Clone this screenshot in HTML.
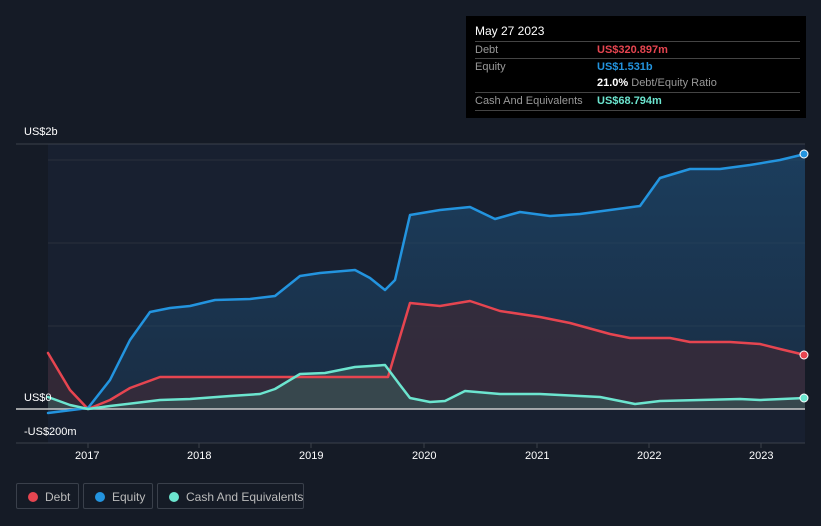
<!DOCTYPE html>
<html><head><style>
html,body{margin:0;width:821px;height:526px;overflow:hidden}
body{background:#151b26;font-family:"Liberation Sans",sans-serif;position:relative}
.tt{position:absolute;left:466px;top:16px;width:340px;height:102px;background:#000;color:#fff;font-size:11px}
.tt .h{position:absolute;left:9px;top:8px;font-size:12px}
.row{position:absolute;left:9px;width:325px;height:17px;border-top:1px solid #444;line-height:17px;color:#999;white-space:nowrap}
.row span{position:absolute;left:122px;font-weight:bold}
.lg{position:absolute;top:483px;height:26px;border:1px solid #3a404b;border-radius:2px;color:#bbb;font-size:12px;line-height:26px;box-sizing:border-box;white-space:nowrap}
.lg i{position:absolute;left:11px;top:8px;width:10px;height:10px;border-radius:50%}
.lg b{font-weight:normal;position:absolute;left:28px}
.ax{position:absolute;color:#fff;font-size:11px}
</style></head><body>
<svg width="821" height="526" style="position:absolute;left:0;top:0">
<defs>
<linearGradient id="ge" x1="0" y1="0" x2="0" y2="1"><stop offset="0" stop-color="#1d4a70" stop-opacity=".7"/><stop offset="1" stop-color="#1d4a70" stop-opacity=".3"/></linearGradient>
</defs>
<rect x="48" y="144" width="757" height="299" fill="#182030"/>
<line x1="16" y1="144" x2="805" y2="144" stroke="#3a404b"/>
<g stroke="#2a303b"><line x1="48" y1="160" x2="805" y2="160"/><line x1="48" y1="243" x2="805" y2="243"/><line x1="48" y1="326" x2="805" y2="326"/></g>
<polygon fill="url(#ge)" points="48,409 48,413 88,408 110,380 130,340 150,312 170,308 190,306 215,300 250,299 275,296 300,276 320,273 355,270 370,278 385,290 395,280 410,215 440,210 470,207 495,219 520,212 550,216 580,214 610,210 640,206 660,178 690,169 720,169 750,165 780,160 805,154 805,409"/>
<polygon fill="#3a2a38" fill-opacity=".8" points="48,409 48,353 70,390 88,409 110,400 130,388 160,377 388,377 410,303 440,306 470,301 500,311 540,317 570,323 610,334 630,338 670,338 690,342 730,342 760,344 780,349 805,355 805,409"/>
<polygon fill="#3a5a5a" fill-opacity=".6" points="48,409 48,397 70,405 88,409 110,406 160,400 190,399 230,396 260,394 275,389 300,374 325,373 355,367 385,365 400,385 410,398 430,402 445,401 465,391 500,394 540,394 600,397 615,400 635,404 660,401 700,400 740,399 760,400 805,398 805,409"/>
<line x1="16" y1="409" x2="805" y2="409" stroke="#ccc" stroke-width="1.5"/>
<line x1="16" y1="443" x2="805" y2="443" stroke="#3a404b"/>
<g stroke="#3a404b"><line x1="88" y1="443" x2="88" y2="448"/><line x1="199" y1="443" x2="199" y2="448"/><line x1="311" y1="443" x2="311" y2="448"/><line x1="424" y1="443" x2="424" y2="448"/><line x1="537" y1="443" x2="537" y2="448"/><line x1="649" y1="443" x2="649" y2="448"/><line x1="761" y1="443" x2="761" y2="448"/></g>
<g fill="none" stroke-width="2.5" stroke-linejoin="round" stroke-linecap="round">
<polyline stroke="#e64550" points="48,353 70,390 88,409 110,400 130,388 160,377 388,377 410,303 440,306 470,301 500,311 540,317 570,323 610,334 630,338 670,338 690,342 730,342 760,344 780,349 805,355"/>
<polyline stroke="#2394df" points="48,413 88,408 110,380 130,340 150,312 170,308 190,306 215,300 250,299 275,296 300,276 320,273 355,270 370,278 385,290 395,280 410,215 440,210 470,207 495,219 520,212 550,216 580,214 610,210 640,206 660,178 690,169 720,169 750,165 780,160 805,154"/>
<polyline stroke="#6ce5cf" points="48,397 70,405 88,409 110,406 160,400 190,399 230,396 260,394 275,389 300,374 325,373 355,367 385,365 400,385 410,398 430,402 445,401 465,391 500,394 540,394 600,397 615,400 635,404 660,401 700,400 740,399 760,400 805,398"/>
</g>
<circle cx="804" cy="355" r="4" fill="#e64550" stroke="#fff" stroke-width="1"/>
<circle cx="804" cy="154" r="4" fill="#2394df" stroke="#fff" stroke-width="1"/>
<circle cx="804" cy="398" r="4" fill="#6ce5cf" stroke="#fff" stroke-width="1"/>
</svg>
<div class="ax" style="left:24px;top:126px">US$2b</div>
<div class="ax" style="left:24px;top:392px">US$0</div>
<div class="ax" style="left:24px;top:426px">-US$200m</div>
<div class="ax" style="left:75px;top:450px">2017</div>
<div class="ax" style="left:187px;top:450px">2018</div>
<div class="ax" style="left:299px;top:450px">2019</div>
<div class="ax" style="left:412px;top:450px">2020</div>
<div class="ax" style="left:525px;top:450px">2021</div>
<div class="ax" style="left:637px;top:450px">2022</div>
<div class="ax" style="left:749px;top:450px">2023</div>
<div class="tt">
<div class="h">May 27 2023</div>
<div class="row" style="top:25px">Debt<span style="color:#e64550">US$320.897m</span></div>
<div class="row" style="top:42px">Equity<span style="color:#2394df">US$1.531b</span></div>
<div class="row" style="top:59px;border-top:none"><span style="color:#fff">21.0% <b style="color:#999;font-weight:normal">Debt/Equity Ratio</b></span></div>
<div class="row" style="top:76px">Cash And Equivalents<span style="color:#6ce5cf">US$68.794m</span></div>
<div class="row" style="top:94px;height:0"></div>
</div>
<div class="lg" style="left:16px;width:63px"><i style="background:#e64550"></i><b>Debt</b></div>
<div class="lg" style="left:83px;width:70px"><i style="background:#2394df"></i><b>Equity</b></div>
<div class="lg" style="left:157px;width:147px"><i style="background:#6ce5cf"></i><b>Cash And Equivalents</b></div>
</body></html>
